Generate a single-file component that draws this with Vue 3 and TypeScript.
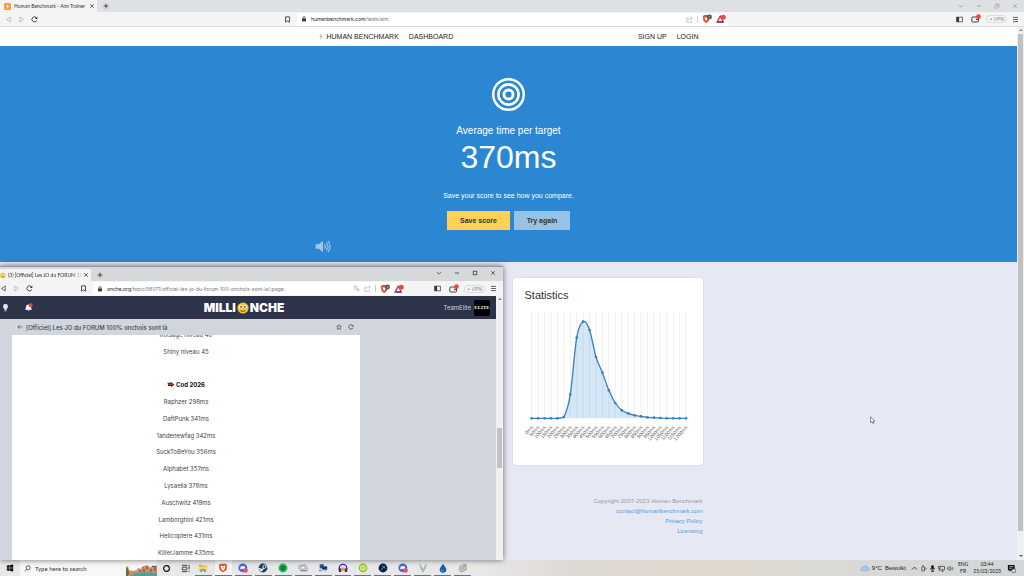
<script setup lang="ts">
interface TaskIcon { name: string; kind: string }

const members: { text: string; heading?: boolean }[] = [
  { text: 'Rotsage niveau 40' },
  { text: 'Shiny niveau 45' },
  { text: '' },
  { text: 'Cod 2026', heading: true },
  { text: 'Raphzer 298ms' },
  { text: 'DaftPunk 341ms' },
  { text: '1andenewfag 342ms' },
  { text: 'SuckToBeYou 356ms' },
  { text: 'Alphabet 357ms' },
  { text: 'Lysaelia 378ms' },
  { text: 'Auschwitz 419ms' },
  { text: 'Lamborghini 421ms' },
  { text: 'Helicoptere 431ms' },
  { text: 'KillerJamme 435ms' },
]

// Chart geometry, in viewBox units
const baseline = 337
const heights = [0, 0, 0, 0, 0, 4, 71, 242, 290, 265, 184, 137, 84, 46, 24, 15, 9, 6, 3, 2, 1, 0, 0, 0, 0]
const points = heights.map((h, i) => ({ x: 20 + i * 19.3, y: baseline - h, label: `${i * 50}ms` }))

function smooth(): string {
  let d = `M${points[0].x} ${points[0].y}`
  for (let i = 0; i < points.length - 1; i++) {
    const a = points[Math.max(0, i - 1)]
    const b = points[i]
    const c = points[i + 1]
    const e = points[Math.min(points.length - 1, i + 2)]
    const y1 = Math.min(baseline, b.y + (c.y - a.y) / 6)
    const y2 = Math.min(baseline, c.y - (e.y - b.y) / 6)
    d += ` C${b.x + (c.x - a.x) / 6} ${y1} ${c.x - (e.x - b.x) / 6} ${y2} ${c.x} ${c.y}`
  }
  return d
}
const line = smooth()
const area = `${line} V${baseline} H${points[0].x} Z`

const tasks: TaskIcon[] = [
  { name: 'File Explorer', kind: 'folder' },
  { name: 'Brave', kind: 'brave' },
  { name: 'Discord', kind: 'discord' },
  { name: 'Steam', kind: 'steam' },
  { name: 'Spotify', kind: 'spotify' },
  { name: 'Drive', kind: 'drive' },
  { name: 'Remote desktop', kind: 'remote' },
  { name: 'Audacity', kind: 'audacity' },
  { name: 'Editor', kind: 'green' },
  { name: 'Player', kind: 'navy' },
  { name: 'Discord canary', kind: 'discord' },
  { name: 'Viewer', kind: 'vee' },
  { name: 'Rainmeter', kind: 'drop' },
  { name: 'Notepad', kind: 'note' },
]
</script>

<template>
  <div class="desktop">
    <svg class="defs" aria-hidden="true">
      <symbol id="i-back" viewBox="0 0 10 10"><path d="M7.5 1.5v7L2 5z" fill="none" stroke="currentColor" /></symbol>
      <symbol id="i-forward" viewBox="0 0 10 10"><path d="M2.5 1.5v7L8 5z" fill="none" stroke="currentColor" /></symbol>
      <symbol id="i-reload" viewBox="0 0 10 10"><path d="M8.3 6.2A3.6 3.6 0 1 1 7.8 2.6" fill="none" stroke="currentColor" stroke-width="1.3" /><path d="M9 .8v3.4H5.6z" fill="currentColor" /></symbol>
      <symbol id="i-mark" viewBox="0 0 10 10"><path d="M2.2 1.2h5.6v7.6L5 7 2.2 8.8z" fill="none" stroke="currentColor" stroke-width="1.2" /></symbol>
      <symbol id="i-lock" viewBox="0 0 10 10"><rect x="1.8" y="4" width="6.4" height="5" fill="currentColor" /><path d="M3.2 4V2.8a1.8 1.8 0 0 1 3.6 0V4" fill="none" stroke="currentColor" stroke-width="1.2" /></symbol>
      <symbol id="i-share" viewBox="0 0 10 10"><path d="M3 3H1v6h7V6.5M3 6.5C3.3 4 5 3 7 3M6.5 1l2.7 2.2-2.7 2" fill="none" stroke="currentColor" stroke-width=".9" /></symbol>
      <symbol id="i-shield" viewBox="0 0 12 12"><path d="M1 3l1.5-1.8h5L9 3 8.2 8.4 5 11 1.8 8.4z" fill="#e8512b" /><path d="M3 4l2 .5L7 4 6 7.2 5 8 4 7.2z" fill="#fff" /><circle cx="9" cy="3.6" r="2.9" fill="#4d5660" /><path d="M9 2.3v2.6" stroke="#cfd3d8" stroke-width=".7" /></symbol>
      <symbol id="i-rewards" viewBox="0 0 12 12"><path d="M5 2.6L1.4 9.6h7.4z" fill="#fff" stroke="#a3256d" stroke-width="1.5" /><path d="M5 2.6L1.4 9.6" fill="none" stroke="#e8512b" stroke-width="1.5" /><path d="M2 9.6h6.4" stroke="#4a35a8" stroke-width="1.5" /><circle cx="8.8" cy="3.8" r="3" fill="#ef4a34" /></symbol>
      <symbol id="i-panel" viewBox="0 0 10 10"><rect x="1" y="1.6" width="8" height="6.8" fill="none" stroke="currentColor" /><path d="M1 1.6h3.4v6.8H1z" fill="currentColor" /></symbol>
      <symbol id="i-wallet" viewBox="0 0 12 12"><rect x="1" y="3.6" width="8" height="6" rx="1" fill="none" stroke="currentColor" stroke-width="1.1" /><path d="M5.8 6.4h3.4" stroke="currentColor" stroke-width="1.2" /><circle cx="9" cy="3.2" r="2.8" fill="#ef4a34" /></symbol>
      <symbol id="i-menu" viewBox="0 0 10 10"><path d="M1.5 2h7M1.5 5h7M1.5 8h7" stroke="currentColor" stroke-width="1.1" /></symbol>
      <symbol id="i-close" viewBox="0 0 10 10"><path d="M2 2l6 6M8 2L2 8" stroke="currentColor" stroke-width="1.2" /></symbol>
      <symbol id="i-plus" viewBox="0 0 10 10"><path d="M5 1v8M1 5h8" stroke="currentColor" stroke-width="1.4" /></symbol>
      <symbol id="i-down" viewBox="0 0 10 10"><path d="M1.5 3.5L5 7l3.5-3.5" fill="none" stroke="currentColor" stroke-width="1.2" /></symbol>
      <symbol id="i-min" viewBox="0 0 10 10"><path d="M1.5 5h7" stroke="currentColor" stroke-width="1.3" /></symbol>
      <symbol id="i-max" viewBox="0 0 10 10"><rect x="2" y="2" width="6" height="6" fill="none" stroke="currentColor" stroke-width="1.2" /></symbol>
      <symbol id="i-restore" viewBox="0 0 10 10"><path d="M1.5 3.5h5v5h-5zM3.5 3.5v-2h5v5h-2" fill="none" stroke="currentColor" /></symbol>
      <symbol id="i-smile" viewBox="0 0 12 12"><circle cx="6" cy="6" r="5.6" fill="#f2c53a" /><circle cx="3.8" cy="4.8" r="1.7" fill="#fff" /><circle cx="8" cy="4.8" r="1.7" fill="#fff" /><circle cx="4" cy="4.9" r=".8" fill="#2b2417" /><circle cx="7.8" cy="4.9" r=".8" fill="#2b2417" /><path d="M3.4 8.6c1.6 1.2 3.6 1 5-.6" fill="none" stroke="#6b4512" /></symbol>
    </svg>

    <main class="browser">
      <div class="tabs">
        <div class="tab">
          <svg class="fav" viewBox="0 0 10 10"><rect width="10" height="10" rx="1" fill="#f2a52b" /><path d="M5.5 1.5L3 5.4h1.8L4.4 8.5 7 4.6H5.2z" fill="#fff" /></svg>
          <span class="tab-title">Human Benchmark - Aim Trainer</span>
          <button aria-label="Close tab"><svg><use href="#i-close" /></svg></button>
        </div>
        <button class="new" aria-label="New tab"><svg><use href="#i-plus" /></svg></button>
        <div class="controls dim">
          <button aria-label="Search tabs"><svg><use href="#i-down" /></svg></button>
          <button aria-label="Minimize"><svg><use href="#i-min" /></svg></button>
          <button aria-label="Restore"><svg><use href="#i-restore" /></svg></button>
          <button aria-label="Close"><svg><use href="#i-close" /></svg></button>
        </div>
      </div>
      <div class="toolbar">
        <div class="side">
          <button class="off" aria-label="Back"><svg><use href="#i-back" /></svg></button>
          <button class="off" aria-label="Forward"><svg><use href="#i-forward" /></svg></button>
          <button aria-label="Reload"><svg><use href="#i-reload" /></svg></button>
          <button class="mark" aria-label="Bookmark"><svg><use href="#i-mark" /></svg></button>
        </div>
        <div class="address">
          <svg class="lock"><use href="#i-lock" /></svg>
          <a class="url" href="#">humanbenchmark.com<span>/tests/aim</span></a>
          <button class="off" aria-label="Share"><svg><use href="#i-share" /></svg></button>
          <i class="bar"></i>
          <button class="wide" aria-label="Shields"><svg><use href="#i-shield" /></svg></button>
          <button class="wide" aria-label="Rewards"><svg><use href="#i-rewards" /></svg></button>
        </div>
        <div class="side end">
          <button class="panel" aria-label="Sidebar"><svg><use href="#i-panel" /></svg></button>
          <button class="wide" aria-label="Wallet"><svg><use href="#i-wallet" /></svg></button>
          <button class="vpn">• VPN</button>
          <button aria-label="Menu"><svg><use href="#i-menu" /></svg></button>
        </div>
      </div>

      <div class="viewport">
        <div class="page">
          <nav class="nav">
            <a class="brand" href="#"><svg viewBox="0 0 6 10"><path d="M3.6 1L1.4 5h2.8L2.4 9" fill="none" stroke="#8d9196" /></svg>HUMAN BENCHMARK</a>
            <a href="#">DASHBOARD</a>
            <a class="push" href="#">SIGN UP</a>
            <a href="#">LOGIN</a>
          </nav>
          <section class="hero">
            <svg class="target" viewBox="0 0 32 32" fill="none" stroke="#fff">
              <circle cx="16" cy="16" r="14.8" stroke-width="2.4" /><circle cx="16" cy="16" r="9.8" stroke-width="2.5" /><circle cx="16" cy="16" r="4.4" stroke-width="2.8" />
            </svg>
            <h2>Average time per target</h2>
            <h1>370ms</h1>
            <p>Save your score to see how you compare.</p>
            <div class="actions">
              <button class="save">Save score</button>
              <button class="again">Try again</button>
            </div>
            <button class="sound" aria-label="Sound">
              <svg viewBox="0 0 16 14"><path d="M0 4.5h3.4L8 .8v12.4L3.4 9.5H0z" fill="#9cc6ea" /><path d="M9.6 4.6c1.3 1.4 1.3 3.4 0 4.8M11.4 2.7c2.4 2.6 2.4 6 0 8.6M13.2 .9c3.3 3.6 3.3 8.6 0 12.2" fill="none" stroke="#9cc6ea" stroke-width="1.2" /></svg>
            </button>
          </section>
          <section class="lower">
            <div class="card">
              <h3>Statistics</h3>
              <svg class="chart" viewBox="0 0 498 420">
                <path v-for="p in points" :key="p.label" :d="`M${p.x} 18V${baseline}`" stroke="#e8e8e8" stroke-width="2" />
                <path :d="area" fill="#2b87d1" fill-opacity=".2" />
                <path :d="line" fill="none" stroke="#3a82be" stroke-width="4" />
                <circle v-for="p in points" :key="p.label" :cx="p.x" :cy="p.y" r="4" fill="#3a7fb8" />
                <text v-for="p in points" :key="p.label" :transform="`translate(${p.x + 5} 365) rotate(-48)`" text-anchor="end">{{ p.label }}</text>
              </svg>
            </div>
            <footer>
              <span>Copyright 2007-2023 Human Benchmark</span>
              <a href="#">contact@humanbenchmark.com</a>
              <a href="#">Privacy Policy</a>
              <a href="#">Licensing</a>
            </footer>
          </section>
        </div>
        <div class="scroll"><i class="up"></i><b></b><i class="dn"></i></div>
      </div>
    </main>

    <section class="window">
      <div class="tabs">
        <div class="tab">
          <svg class="fav"><use href="#i-smile" /></svg>
          <span class="tab-title fade">(3) [Officiel] Les JO du FORUM 10</span>
          <button aria-label="Close tab"><svg><use href="#i-close" /></svg></button>
        </div>
        <button class="new" aria-label="New tab"><svg><use href="#i-plus" /></svg></button>
        <div class="controls">
          <button aria-label="Search tabs"><svg><use href="#i-down" /></svg></button>
          <button aria-label="Minimize"><svg><use href="#i-min" /></svg></button>
          <button aria-label="Maximize"><svg><use href="#i-max" /></svg></button>
          <button aria-label="Close"><svg><use href="#i-close" /></svg></button>
        </div>
      </div>
      <div class="toolbar">
        <div class="side">
          <button aria-label="Back"><svg><use href="#i-back" /></svg></button>
          <button class="off" aria-label="Forward"><svg><use href="#i-forward" /></svg></button>
          <button aria-label="Reload"><svg><use href="#i-reload" /></svg></button>
          <button class="mark" aria-label="Bookmark"><svg><use href="#i-mark" /></svg></button>
        </div>
        <div class="address">
          <svg class="lock"><use href="#i-lock" /></svg>
          <a class="url" href="#">onche.org<span>/topic/56071/officiel-les-jo-du-forum-100-onchois-sont-la/:page:</span></a>
          <button class="off" aria-label="Translate"><svg viewBox="0 0 10 10"><path d="M.8 2h5M3.3 1v1M5 2C4.5 4 3 5.5 1 6.5M2 3.5c.8 1.4 2 2.3 3.2 2.8M5 9l2-5 2 5M5.7 7.5h2.6" fill="none" stroke="currentColor" stroke-width=".9" /></svg></button>
          <button class="off" aria-label="Share"><svg><use href="#i-share" /></svg></button>
          <i class="bar"></i>
          <button class="wide" aria-label="Shields"><svg><use href="#i-shield" /></svg></button>
          <button class="wide" aria-label="Rewards"><svg><use href="#i-rewards" /></svg></button>
        </div>
        <div class="side end">
          <button class="panel" aria-label="Sidebar"><svg><use href="#i-panel" /></svg></button>
          <button class="wide" aria-label="Wallet"><svg><use href="#i-wallet" /></svg></button>
          <button class="vpn">• VPN</button>
          <button aria-label="Menu"><svg><use href="#i-menu" /></svg></button>
        </div>
      </div>
      <div class="viewport">
        <div class="forum">
          <header>
            <div class="left">
              <button aria-label="Theme"><svg viewBox="0 0 10 10"><path d="M5 .8a3 3 0 0 0-1.6 5.4v1.3h3.2V6.2A3 3 0 0 0 5 .8zM3.7 8.2h2.6v1H3.7z" fill="#dfe4ee" /></svg></button>
              <button aria-label="Notifications"><svg viewBox="0 0 10 10"><path d="M1 7.5c1-.8 1-2 1.2-3.3A2.7 2.7 0 0 1 5 1.8a2.7 2.7 0 0 1 2.7 2.4C8 5.5 8 6.7 9 7.5zM3.9 8.1h2.2L5 9.3z" fill="#fff" /><circle cx="7.4" cy="2.6" r="2.2" fill="#e04848" /></svg></button>
            </div>
            <a class="logo" href="#">MILLI<svg><use href="#i-smile" /></svg>NCHE</a>
            <div class="user"><a href="#">TeamElite</a><span class="avatar">ELITE</span></div>
          </header>
          <div class="topic">
            <button aria-label="Back to topics"><svg viewBox="0 0 10 10"><path d="M9 5H1.5M4.5 2L1.5 5l3 3" fill="none" stroke="currentColor" /></svg></button>
            <h4>[Officiel] Les JO du FORUM 100% onchois sont là</h4>
            <button class="star" aria-label="Favourite"><svg viewBox="0 0 10 10"><path d="M5 1l1.2 2.7 2.9.3L7 6l.6 2.9L5 7.4 2.4 8.9 3 6 .9 4l2.9-.3z" fill="none" stroke="currentColor" /></svg></button>
            <button aria-label="Refresh"><svg><use href="#i-reload" /></svg></button>
          </div>
          <article>
            <ul>
              <li v-for="(m, i) in members" :key="i" :class="{ head: m.heading }">
                <svg v-if="m.heading" viewBox="0 0 14 10"><path d="M1 2h5V0L13 5 7 10V7.5H2z" fill="#4a1717" /><path d="M2 3.2h5v-1L11 5 7.5 6H3z" fill="#cf3f2f" /></svg>{{ m.text }}
              </li>
            </ul>
          </article>
        </div>
        <div class="scroll"><i class="up"></i><b></b></div>
      </div>
    </section>

    <svg class="cursor" viewBox="0 0 10 14"><path d="M1 1v9.5l2.3-2 1.5 3.6 1.7-.8L5 7.9h3z" fill="#fff" stroke="#333" stroke-width=".9" /></svg>

    <div class="taskbar">
      <button class="start" aria-label="Start"><svg viewBox="0 0 10 10"><path d="M1 1.8L4.6 1.3v3.5H1zM5.1 1.2L9 .7v4.1H5.1zM1 5.2h3.6v3.5L1 8.2zM5.1 5.2H9v4.1l-3.9-.6z" fill="#111" /></svg></button>
      <label class="search">
        <svg viewBox="0 0 10 10"><circle cx="6" cy="4" r="2.9" fill="none" stroke="#222" /><path d="M4 6.2L1 9.2" stroke="#222" /></svg>
        <input type="text" placeholder="Type here to search" aria-label="Type here to search" />
        <svg class="scene" viewBox="0 0 31 12"><path d="M0 12V3l2-1 1 4 4 1 4-1 1-2 3 1 1-2 3 1 1-3 3 1 1 2 3-3 1 2 2-2 1 1v10z" fill="#c7906c" /><path d="M14 6v2M18 5v3M21 3v2M25 5v3M29 3v4" stroke="#8e4a36" stroke-width="1.2" /><path d="M16 3.5l4-1M26 2.5h4" stroke="#a04432" /><path d="M4 12c5-4 12-4 27-3v3z" fill="#4aa19c" /><path d="M0 3l2 2 1 4-1 3H0z" fill="#6a6a3c" /></svg>
      </label>
      <button class="tool" aria-label="Cortana"><svg viewBox="0 0 10 10"><circle cx="5" cy="5" r="3.2" fill="none" stroke="#111" stroke-width="1.3" /></svg></button>
      <button class="tool" aria-label="Task view"><svg viewBox="0 0 10 10"><path d="M1.5 3.5h5v3h-5zM1 1.5h6M1 8.5h6M9 1v5M9 7.5v1.5" fill="none" stroke="#222" stroke-width=".9" /></svg></button>
      <div class="apps">
        <button v-for="(t, i) in tasks" :key="i" :aria-label="t.name" :class="{ active: t.kind === 'brave' }">
          <svg viewBox="0 0 12 12">
            <template v-if="t.kind === 'folder'"><path d="M1 2h4l1 1.2h5V10H1z" fill="#e9b53b" /><path d="M1 4.5h10V10H1z" fill="#fbd866" /><path d="M3 7.5h6V11H7.5V9h-3v2H3z" fill="#3b8fd4" /></template>
            <template v-else-if="t.kind === 'brave'"><path d="M1 2.5L3 .8h6l2 1.7-.9 6L6 11.5 1.9 8.5z" fill="#e9502b" /><path d="M3 3l3 .8L9 3 8.3 6.5 6 9.5 3.7 6.5z" fill="#fff" /><path d="M5 5h2L6 7z" fill="#e9502b" /></template>
            <template v-else-if="t.kind === 'discord'"><circle cx="5.8" cy="5.8" r="5.3" fill="#5562d8" /><path d="M3 7.8c-.4-1.500 0-3.100 .7-4h4c.8 .9 1.200 2.500 .8 4L6.900 7H4.500z" fill="#fff" /><circle cx="9" cy="9" r="2.8" fill="#e8505b" /></template>
            <template v-else-if="t.kind === 'steam'"><circle cx="6" cy="6" r="5.3" fill="#123b61" /><circle cx="7.7" cy="4.5" r="1.9" fill="none" stroke="#fff" stroke-width="1.1" /><path d="M.8 6.5l3.5 1.8 2.6-2" fill="none" stroke="#fff" stroke-width="1.5" /><circle cx="4.2" cy="8.3" r="1.5" fill="#fff" /></template>
            <template v-else-if="t.kind === 'spotify'"><circle cx="6" cy="6" r="5.3" fill="#20b455" /><path d="M3 4.5c2-.8 4.5-.5 6.2.5M3.3 6.3c1.8-.6 3.8-.4 5.2.4M3.7 8c1.3-.4 2.8-.3 4 .4" fill="none" stroke="#12351f" stroke-width=".9" /></template>
            <template v-else-if="t.kind === 'drive'"><path d="M1 3l8-1 2 3v4H3L1 7z" fill="#d2d4d6" stroke="#888e94" stroke-width=".7" /><circle cx="6" cy="5.5" r="2" fill="#fff" stroke="#777" stroke-width=".6" /><path d="M3 9.5h8" stroke="#777" /></template>
            <template v-else-if="t.kind === 'remote'"><path d="M2 1.5h5v5H2z" fill="#2455a4" /><path d="M5 4h6v4H5z" fill="#183a78" /><path d="M1 8h4v2H1zM7 9h4v1H7z" fill="#8d9cb4" /></template>
            <template v-else-if="t.kind === 'audacity'"><path d="M1.5 8V6a4.5 4.5 0 0 1 9 0v2" fill="none" stroke="#2626c8" stroke-width="1.5" /><path d="M3.8 5.5h4.4v4H3.8z" fill="#f5a01f" /><path d="M1 6.5h2.8v4.3H1zM8.2 6.5H11v4.3H8.2z" fill="#2222b5" /></template>
            <template v-else-if="t.kind === 'green'"><circle cx="6" cy="6" r="5.3" fill="#97c21f" /><rect x="3" y="3.5" width="6" height="4.8" rx="2" fill="none" stroke="#fff" stroke-width="1.1" /><path d="M4.5 6h3" stroke="#fff" /></template>
            <template v-else-if="t.kind === 'navy'"><circle cx="6" cy="6" r="5.3" fill="#0d1f3d" /><path d="M3.5 8.5L8.5 3M5 3.5l4 3" stroke="#4b9be0" stroke-width="1.2" /></template>
            <template v-else-if="t.kind === 'vee'"><path d="M2 1l3 5 1 4 1-4 3-5-1.5 6L6 11 3.5 7z" fill="#a9b6b0" stroke="#90a098" stroke-width=".5" /></template>
            <template v-else-if="t.kind === 'drop'"><path d="M6 .8C8 4 10 5.6 10 7.8a4 4 0 0 1-8 0C2 5.6 4 4 6 .8z" fill="#1762a8" /><path d="M4 8a2 2 0 0 0 2 2" fill="none" stroke="#5fb2ee" /></template>
            <template v-else><path d="M2 4l5-2.5 3 1v6L4 11 1.5 9z" fill="#b9c6c1" stroke="#7d9088" stroke-width=".6" /><path d="M9.5 1L5 7.5" stroke="#c28b45" /></template>
          </svg>
        </button>
      </div>
      <div class="tray">
        <svg class="cloud" viewBox="0 0 12 10"><path d="M3 8.5a2 2 0 0 1 0-4 3.2 3.2 0 0 1 6-.3 2.2 2.2 0 0 1 .5 4.3z" fill="#a8c8f4" stroke="#6d9de0" stroke-width=".7" /></svg>
        <span class="weather"><span>9°C</span><span>Bewolkt</span></span>
        <svg viewBox="0 0 10 10"><path d="M1.5 6.5L5 3l3.5 3.5" fill="none" stroke="#222" stroke-width="1.2" /></svg>
        <svg viewBox="0 0 10 10"><rect x="2.5" y="2.5" width="4" height="6" rx="1" fill="none" stroke="#222" /><path d="M3.5 1h2M7.5 4l1.5 1-1.5 1.5" fill="none" stroke="#222" /></svg>
        <svg viewBox="0 0 10 10"><rect x="3.2" y=".5" width="3.6" height="5.5" rx="1.5" fill="#111" /><path d="M2 4.5c0 4 6 4 6 0M5 7.5v2M3 9.4h4" fill="none" stroke="#111" /></svg>
        <svg viewBox="0 0 10 10"><path d="M3 2h6.3v4.8H3M5 9h3M6.3 7v2M.8 2H3v3H.8zM2 5v4" fill="none" stroke="#222" stroke-width=".9" /></svg>
        <svg viewBox="0 0 10 10"><path d="M.8 3.8h1.7L4.5 2v6L2.5 6.2H.8z" fill="none" stroke="#222" stroke-width=".8" /><path d="M6 3.7c.7.8.7 1.8 0 2.6M7.3 2.5c1.5 1.5 1.5 3.5 0 5" fill="none" stroke="#222" stroke-width=".8" /></svg>
        <span class="lang">ENG<br>FR</span>
        <span class="clock">03:44<br>25/03/2023</span>
        <svg class="note" viewBox="0 0 10 10"><path d="M1 1h7.5v6H4.5L3 8.8V7H1z" fill="#111" /><path d="M2.5 3h4.5M2.5 4.8h3" stroke="#fff" stroke-width=".7" /><circle cx="7.5" cy="7.4" r="2.2" fill="#ddd" stroke="#222" stroke-width=".6" /></svg>
      </div>
    </div>
  </div>
</template>

<style>
html, body { margin: 0; overflow: hidden; }
</style>

<style scoped>
* { box-sizing: border-box; }
.desktop { position: relative; display: flex; flex-direction: column; height: 100vh; overflow: hidden; font-family: "Liberation Sans", Arial, sans-serif; font-size: 7px; color: #333; background: #e6e8f4; }
.defs { position: absolute; width: 0; height: 0; }
button { display: flex; align-items: center; justify-content: center; padding: 0; border: 0; background: none; color: inherit; font: inherit; }
a { color: inherit; text-decoration: none; }
svg { display: block; flex: none; width: 7px; height: 7px; }
h1, h2, h3, h4, p, ul { margin: 0; padding: 0; font-weight: 400; }

.browser { display: flex; flex-direction: column; flex: 1; min-height: 0; }
.tabs { display: flex; align-items: center; height: 12px; flex: none; background: #dee1e4; font-family: Lato, "Open Sans", sans-serif; font-size: 5px; }
.tab { display: flex; align-items: center; width: 97px; height: 100%; padding: 0 2px 0 4px; background: #f4f4f4; }
.fav { width: 7px; height: 7px; margin-right: 3px; }
.tab-title { flex: 1; white-space: nowrap; overflow: hidden; color: #333; }
.tab button svg { width: 6px; height: 6px; }
.new { margin-left: 6px; }
.new svg { width: 6px; height: 6px; }
.controls { display: flex; gap: 12px; margin-left: auto; padding-right: 6px; color: #333; }
.controls svg { width: 6px; height: 6px; }
.dim { color: #999; }
.toolbar { display: flex; align-items: center; height: 15px; flex: none; background: #f4f4f4; border-bottom: 1px solid #dcdcdc; font-family: Inter, "Open Sans", sans-serif; font-size: 5px; color: #333; }
.side { display: flex; flex: 1; align-items: center; gap: 6px; padding-left: 5px; }
.side .mark { margin-left: auto; margin-right: 6px; }
.end { justify-content: flex-end; gap: 5px; padding: 0 5px 0 0; }
.panel { margin-right: 3px; }
.off { color: #aaa; }
.wide svg { width: 10px; height: 10px; }
.vpn { height: 8px; padding: 0 2px; border: 1px solid #ddd; border-radius: 4px; color: #888; }
.address { display: flex; align-items: center; gap: 4px; width: 42%; height: 13px; padding: 0 1px 0 4px; background: #fff; }
.lock { width: 6px; height: 6px; }
.url { flex: 1; min-width: 0; white-space: nowrap; overflow: hidden; color: #222; }
.url span { color: #777; }
.bar { width: 1px; height: 7px; background: #ccc; }

.viewport { display: flex; flex: 1; min-height: 0; }
.page { flex: 1; min-width: 0; display: flex; flex-direction: column; background: linear-gradient(#fff 19px, #e6e8f4 19px); }
.scroll { display: flex; flex-direction: column; align-items: center; width: 7px; flex: none; background: #f0f0f0; }
.scroll b { width: 5px; flex: 1; background: #c1c1c1; }
.scroll .up { margin: 2px 0 3px; border: 2px solid transparent; border-top: 0; border-bottom: 2px solid #888; }
.scroll .dn { margin: 24px 0 3px; border: 2px solid transparent; border-bottom: 0; border-top: 2px solid #555; }

.nav { display: flex; align-items: center; gap: 10px; height: 19px; width: 100%; max-width: 380px; margin: 0 auto; color: #222; }
.brand { display: flex; align-items: center; gap: 4px; }
.brand svg { width: 4px; height: 7px; }
.push { margin-left: auto; }
.hero { position: relative; display: flex; flex-direction: column; align-items: center; height: 216px; flex: none; padding-top: 32px; background: #2b87d1; color: #fff; }
.target { width: 33px; height: 33px; }
.hero h2 { margin-top: 14px; font-size: 10px; line-height: 12px; }
.hero h1 { font-size: 32px; line-height: 40px; }
.hero p { margin-top: 14px; font-size: 7px; line-height: 10px; }
.actions { display: flex; gap: 4px; margin-top: 10px; }
.actions button { height: 19px; padding: 0 12px; font-weight: 700; font-size: 7px; color: #333; }
.actions .save { background: #ffd154; min-width: 63px; }
.actions .again { background: #95c3e8; min-width: 56px; }
.sound { position: absolute; left: 31%; bottom: 9px; }
.sound svg { width: 16px; height: 13px; }
.lower { display: flex; flex-direction: column; align-items: flex-end; width: 100%; max-width: 388px; margin: 0 auto; padding-top: 16px; }
.card { width: 190px; height: 187px; padding: 11px 12px; background: #fff; border-radius: 2px; box-shadow: 0 0 2px rgba(80, 80, 130, .2); }
.card h3 { font-size: 11px; line-height: 13px; }
.chart { width: 100%; height: auto; margin-top: 4px; overflow: visible; }
.chart text { font-size: 15px; fill: #555; }
footer { display: flex; flex-direction: column; align-items: flex-end; margin-top: 32px; font-size: 6px; line-height: 9px; gap: 1px; color: #9a9ca3; }
footer a { color: #4ba3e3; }

.window { position: absolute; left: 0; top: 266px; bottom: 16px; width: 503px; display: flex; flex-direction: column; background: #d6d9dc; border-top: 1px solid #999; box-shadow: 0 0 6px rgba(0, 0, 0, .55); }
.window .tabs { height: 14px; padding-top: 2px; background: #d6d9dc; }
.window .tab { width: 91px; padding-left: 0; }
.window .fav { width: 6px; margin-right: 2px; }
.fade { mask-image: linear-gradient(90deg, #000 85%, transparent); }
.window .controls { padding-right: 7px; padding-bottom: 5px; }
.window .side { flex: none; width: 93px; padding-left: 0; }
.window .end { flex: 1; padding-right: 6px; }
.window .toolbar { border-bottom: 0; }
.window .toolbar .address { width: 312px; }
.window .scroll b { flex: none; height: 40px; margin-top: 125px; }
.forum { display: flex; flex-direction: column; flex: 1; min-width: 0; background: #d1d5dd; font-family: Inter, sans-serif; font-size: 6px; }
.forum header { display: grid; grid-template-columns: 1fr auto 1fr; align-items: center; height: 23px; flex: none; background: #2d3449; color: #cdd2dc; }
.left { display: flex; gap: 14px; padding-left: 1px; }
.left svg { width: 9px; height: 9px; }
.logo { display: flex; align-items: center; gap: 1px; margin-right: 8px; font-weight: 900; font-size: 12px; color: #fff; }
.logo svg { width: 12px; height: 12px; }
.user { display: flex; align-items: center; justify-content: flex-end; gap: 3px; padding-right: 6px; }
.avatar { display: flex; align-items: center; justify-content: center; width: 16px; height: 16px; border-radius: 2px; background: #000; color: #fff; font-family: "Liberation Serif", serif; font-weight: 700; font-size: 5px; }
.topic { display: flex; align-items: center; gap: 3px; width: 100%; max-width: 354px; height: 16px; flex: none; padding-left: 17px; color: #3b414f; }
.topic svg { width: 6px; height: 6px; }
.topic h4 { font-weight: 500; font-size: 6px; }
.star { margin: 0 3px 0 auto; }
article { display: flex; flex: 1; min-height: 0; width: 348px; margin-left: 12px; background: #fff; overflow: hidden; }
ul { display: grid; flex: 1; grid-auto-rows: 1fr; margin: -9px 0 -1px; list-style: none; color: #444; }
li { display: flex; align-items: center; justify-content: center; min-height: 0; }
.head { font-weight: 700; color: #111; }
.head svg { width: 8px; height: 7px; margin-right: 1px; }

.cursor { position: absolute; left: 870px; top: 416px; width: 6px; height: 9px; }

.taskbar { display: flex; align-items: stretch; height: 16px; flex: none; background: linear-gradient(90deg, #e7e8ea, #e9e9ea 46%, #ded9d4 56%, #e0d8cd 70%, #dad9d5 80%, #d0d7d9); font-family: Lato, "Open Sans", sans-serif; font-size: 6px; color: #222; }
.start { width: 20px; }
.start svg { width: 8px; height: 8px; }
.search { display: flex; align-items: center; width: 137px; padding-left: 4px; background: #f7f7f7; }
.search input { flex: 1; min-width: 0; margin-left: 4px; padding: 0; border: 0; background: none; font: inherit; outline: 0; }
.search input::placeholder { color: #333; opacity: 1; }
.search .scene { width: 31px; height: 12px; align-self: flex-end; }
.tool { width: 19px; }
.tool svg { width: 9px; height: 9px; }
.apps { display: grid; grid-template-columns: repeat(14, 1fr); width: 276px; column-gap: 3px; }
.apps button { border-bottom: 1px solid #3b7fb5; }
.apps .active { background: #f6f6f6; }
.apps svg { width: 10px; height: 10px; }
.tray { display: flex; align-items: center; gap: 2px; margin-left: auto; padding-right: 8px; }
.cloud { width: 10px; height: 8px; }
.weather { display: flex; gap: 3px; margin-right: 3px; font-family: "Liberation Sans", sans-serif; }
.lang, .clock { font-size: 5px; line-height: 7px; text-align: center; }
.lang { margin-left: 2px; }
.clock { margin: 0 4px 0 3px; }
.note { width: 9px; height: 9px; }
</style>
